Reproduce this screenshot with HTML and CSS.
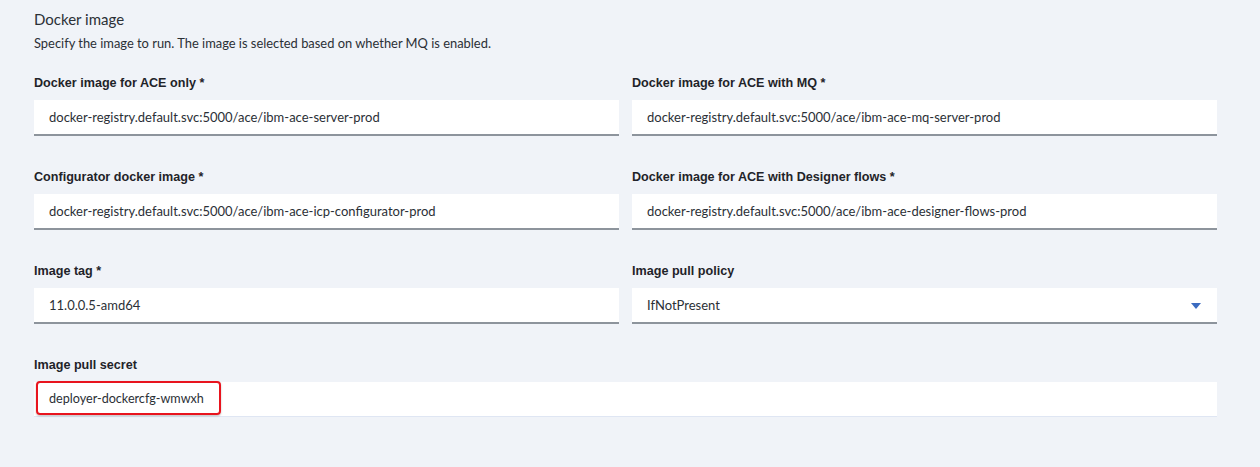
FILE: index.html
```html
<!DOCTYPE html>
<html>
<head>
<meta charset="utf-8">
<link rel="stylesheet" href="styles.css">
</head>
<body>
<div class="section">
  <h2 class="title">Docker image</h2>
  <p class="desc">Specify the image to run. The image is selected based on whether MQ is enabled.</p>
  <div class="grid">
    <div class="field">
      <div class="label">Docker image for ACE only *</div>
      <div class="input">docker-registry.default.svc:5000/ace/ibm-ace-server-prod</div>
    </div>
    <div class="field">
      <div class="label">Docker image for ACE with MQ *</div>
      <div class="input">docker-registry.default.svc:5000/ace/ibm-ace-mq-server-prod</div>
    </div>
    <div class="field">
      <div class="label">Configurator docker image *</div>
      <div class="input">docker-registry.default.svc:5000/ace/ibm-ace-icp-configurator-prod</div>
    </div>
    <div class="field">
      <div class="label">Docker image for ACE with Designer flows *</div>
      <div class="input">docker-registry.default.svc:5000/ace/ibm-ace-designer-flows-prod</div>
    </div>
    <div class="field">
      <div class="label">Image tag *</div>
      <div class="input">11.0.0.5-amd64</div>
    </div>
    <div class="field">
      <div class="label">Image pull policy</div>
      <div class="input select">IfNotPresent<span class="caret"></span></div>
    </div>
    <div class="field full">
      <div class="label">Image pull secret</div>
      <div class="input plain"><span class="highlight">deployer-dockercfg-wmwxh</span></div>
    </div>
  </div>
</div>
</body>
</html>
```
FILE: styles.css
```css
html, body {
  margin: 0;
  padding: 0;
  background: #f0f3f8;
}
body {
  width: 1260px;
  height: 467px;
  overflow: hidden;
  font-family: Lato, "Noto Sans", sans-serif;
  color: #1f2329;
}
.section {
  padding: 9px 43px 0 34px;
}
.title {
  margin: 0;
  font-weight: 400;
  font-size: 15px;
  line-height: 20px;
  color: #2b3036;
}
.desc {
  margin: 5px 0 0;
  font-size: 12.9px;
  line-height: 18px;
  color: #2b3036;
}
.grid {
  margin-top: 20px;
  display: grid;
  grid-template-columns: 1fr 1fr;
  column-gap: 13px;
  row-gap: 30px;
}
.field.full {
  grid-column: 1 / span 2;
}
.label {
  font-family: "Liberation Sans", Arial, sans-serif;
  font-weight: 700;
  font-size: 12.6px;
  line-height: 20px;
  color: #1f2329;
  padding-top: 1px;
  margin-bottom: 7px;
}
.input {
  position: relative;
  height: 34px;
  background: #ffffff;
  border-bottom: 2px solid #8d949c;
  padding-left: 15px;
  font-size: 13px;
  line-height: 34px;
  color: #2b3036;
  white-space: nowrap;
}
.input.plain {
  border-bottom: 1px solid #dfe6f3;
  height: 34px;
}
.caret {
  position: absolute;
  right: 16px;
  top: 15px;
  width: 0;
  height: 0;
  border-left: 5px solid transparent;
  border-right: 5px solid transparent;
  border-top: 6px solid #3b6bc0;
}
.highlight {
  position: absolute;
  left: 2px;
  top: -1px;
  width: 185px;
  height: 34px;
  box-sizing: border-box;
  border: 2px solid #e8141e;
  border-radius: 4px;
  padding-left: 11px;
  font-size: 12.6px;
  line-height: 31px;
  box-shadow: 0 1px 2px rgba(0,0,0,0.25);
}
```
